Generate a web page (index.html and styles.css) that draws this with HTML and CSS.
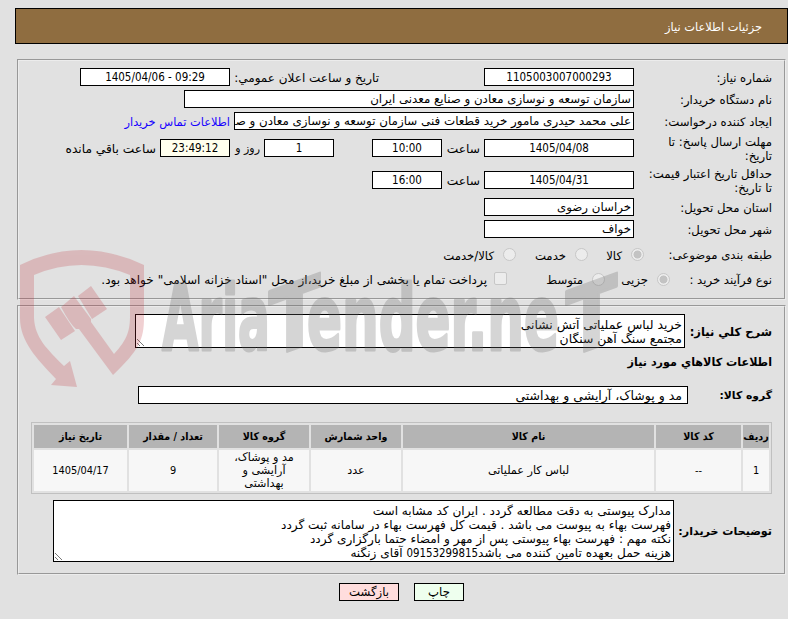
FILE: index.html
```html
<!DOCTYPE html>
<html lang="fa" dir="rtl">
<head>
<meta charset="utf-8">
<title>جزئیات اطلاعات نیاز</title>
<link rel="stylesheet" href="styles.css">
</head>
<body>
<header class="titlebar">جزئیات اطلاعات نیاز</header>
<main>
<section class="panel info">
  <div class="row"><span class="label">شماره نیاز:</span><span class="field num w150">1105003007000293</span><span class="date-label">تاریخ و ساعت اعلان عمومي:</span><span class="field num w150">1405/04/06 - 09:29</span></div>
  <div class="row"><span class="label">نام دستگاه خریدار:</span><span class="field w450">سازمان توسعه و نوسازی معادن و صنایع معدنی ایران</span></div>
  <div class="row"><span class="label">ایجاد کننده درخواست:</span><span class="field w400">علی محمد حیدری مامور خرید قطعات فنی سازمان توسعه و نوسازی معادن و صنایع معدنی</span><a class="link">اطلاعات تماس خریدار</a></div>
  <div class="row tall"><span class="label">مهلت ارسال پاسخ: تا<br>تاریخ:</span><span class="field num w150">1405/04/08</span><span class="unit hour">ساعت</span><span class="field num w70">10:00</span><span class="field num w70 days">1</span><span class="unit day">روز و</span><span class="field num w70 timer">23:49:12</span><span class="unit">ساعت باقي مانده</span></div>
  <div class="row tall"><span class="label">حداقل تاریخ اعتبار قیمت:<br>تا تاریخ:</span><span class="field num w150">1405/04/31</span><span class="unit hour">ساعت</span><span class="field num w70">16:00</span></div>
  <div class="row"><span class="label">استان محل تحویل:</span><span class="field w150">خراسان رضوی</span></div>
  <div class="row"><span class="label">شهر محل تحویل:</span><span class="field w150">خواف</span></div>
  <div class="row options"><span class="label opt-label">طبقه بندی موضوعی:</span><i class="radio on"></i><span class="opt goods">کالا</span><i class="radio"></i><span class="opt service">خدمت</span><i class="radio"></i><span class="opt both">کالا/خدمت</span></div>
  <div class="row options process"><span class="label proc-label">نوع فرآیند خرید :</span><i class="radio on"></i><span class="opt small">جزیی</span><i class="radio"></i><span class="opt medium">متوسط</span><i class="check"></i><span class="opt treasury">پرداخت تمام یا بخشی از مبلغ خرید،از محل "اسناد خزانه اسلامی" خواهد بود.</span></div>
</section>
<section class="panel goods-panel">
  <div class="line summary"><b class="cap">شرح کلي نیاز:</b><div class="area area-summary">خرید لباس عملیاتی آتش نشانی<br>مجتمع سنگ آهن سنگان<svg class="grip" viewBox="0 0 8 8"><path d="M0 1l7 7M0 5l3 3"/></svg></div></div>
  <h2>اطلاعات کالاهاي مورد نیاز</h2>
  <div class="line group"><b class="cap">گروه کالا:</b><span class="field w550">مد و پوشاک، آرایشی و بهداشتی</span></div>
  <table>
    <colgroup><col class="c1"><col class="c2"><col class="c3"><col class="c4"><col class="c5"><col class="c6"><col class="c7"></colgroup>
    <tr><th>ردیف</th><th>کد کالا</th><th>نام کالا</th><th>واحد شمارش</th><th>گروه کالا</th><th>تعداد / مقدار</th><th>تاریخ نیاز</th></tr>
    <tr><td class="digits">1</td><td class="digits">--</td><td>لباس کار عملیاتی</td><td>عدد</td><td>مد و پوشاک،<br>آرایشی و<br>بهداشتی</td><td class="digits">9</td><td class="digits">1405/04/17</td></tr>
  </table>
  <div class="line notes"><b class="cap">توضیحات خریدار:</b><div class="area area-notes">مدارک پیوستی به دقت مطالعه گردد . ایران کد مشابه است<br>فهرست بهاء به پیوست می باشد . قیمت کل فهرست بهاء در سامانه ثبت گردد<br>نکته مهم : فهرست بهاء پیوستی پس از مهر و امضاء حتما بارگزاری گردد<br>هزینه حمل بعهده تامین کننده می باشد<span class="phone">09153299815</span> آقای زنگنه<svg class="grip" viewBox="0 0 8 8"><path d="M0 1l7 7M0 5l3 3"/></svg></div></div>
</section>
</main>
<footer class="actions"><button class="print">چاپ</button><button class="back">بازگشت</button></footer>
<svg class="watermark" viewBox="0 0 620 150" direction="ltr">
  <g class="shield">
    <path d="M20 25Q81-5 144 25V77C144 100 139 110 113 135L79 89 76 89Q70 84 61 67L74 56 91 79 91 82 114 114C128 99 130 90 130 75V35Q81 15 34 35V78C35 98 47 109 64 126L70 121 77 147 51 145 56 139C36 118 20 101 20 78V25Z"/>
    <path d="M45 77L59 67 75 91 61 100ZM78 56L91 46 107 69 92 79Z"/>
  </g>
  <g class="brand">
    <text x="162" y="110" textLength="108" lengthAdjust="spacingAndGlyphs">Aria</text>
    <text transform="translate(269 118) skewY(-20)" textLength="51" lengthAdjust="spacingAndGlyphs">T</text>
    <text x="307" y="110" textLength="252" lengthAdjust="spacingAndGlyphs">ender.ne</text>
    <text transform="translate(566 118) skewY(-20)" textLength="51" lengthAdjust="spacingAndGlyphs">T</text>
  </g>
</svg>
</body>
</html>
```
FILE: styles.css
```css
* { box-sizing: border-box; }
body { margin: 0; width: 788px; height: 619px; overflow: hidden; padding: 8px 0 0; background: #e1e1e1; color: #000; font: 11.7px/14px "DejaVu Sans", sans-serif; position: relative; }
.titlebar { height: 36px; margin-left: 15px; padding: 11px 25px 0 0; border: 1px solid #000; background: #8f6d40; color: #fff; font-size: 11.4px; }
main { padding: 15px 2px 0 17px; }
.panel { border: 2px groove #ececec; padding: 7px 12px 0 0; }
.info { height: 241px; display: flex; flex-direction: column; gap: 4px; }
.row { display: flex; align-items: center; height: 18px; flex: none; white-space: nowrap; }
.row.tall { height: 28px; }
.label { width: 138px; flex: none; padding-top: 2px; }
.field { height: 18px; line-height: 17px; border: 1px solid #000; background: #fff; padding: 0 2px; overflow: hidden; white-space: nowrap; flex: none; font-size: 11.8px; }
.num { text-align: center; direction: ltr; font-family: "DejaVu Sans Condensed", "DejaVu Sans", sans-serif; font-stretch: condensed; font-size: 11.5px; line-height: 17px; }
.w150 { width: 150px; }
.w450 { width: 450px; }
.w400 { width: 400px; font-size: 11.9px; }
.w550 { width: 550px; padding-right: 5px; font-size: 12.5px; }
.w70 { width: 70px; }
.date-label { width: 149px; margin-right: 105px; font-size: 12px; padding-top: 1px; }
.link { color: #1500ff; margin-right: 4px; font-size: 11.4px; padding-top: 1px; }
.unit { margin-right: 4px; padding-top: 2px; }
.hour { width: 38px; font-size: 12.2px; }
.days { margin-right: 38px; }
.day { width: 30px; font-size: 11px; }
.timer { background: #ffffee; }
.timer + .unit { font-size: 12.2px; }
.hour, .day { flex: none; }
.options { height: 22px; padding-top: 2px; }
.process { padding-top: 0; }
.process .opt, .process .label { padding-top: 1px; }
.opt-label { width: 128px; }
.proc-label { width: 102px; }
.radio { width: 13px; height: 13px; flex: none; border: 1px solid #c7c7c7; border-radius: 50%; background: #ececec; }
.radio.on { background: radial-gradient(circle, #c3c3c3 0 3.7px, #ececec 4.3px); }
.check { width: 13px; height: 13px; margin-bottom: 2px; flex: none; border: 1px solid #c7c7c7; border-radius: 2px; background: #ececec; }
.opt { padding-top: 3px; margin-right: 9px; flex: none; }
.goods { width: 34px; }
.service { width: 50px; }
.small { width: 43px; }
.medium { width: 76px; }
.process .treasury { margin-right: 7px; font-size: 12.1px; }
.goods-panel { height: 270px; margin-top: 5px; }
.line { display: flex; align-items: center; }
.cap { flex: none; font-size: 11.3px; white-space: nowrap; padding-top: 2px; }
.area { position: relative; background: #fff; border: 1px solid #000; padding: 3px 2px; white-space: nowrap; overflow: hidden; font-size: 12.1px; }
.area-summary { width: 550px; height: 34px; font-size: 12.4px; }
.summary .cap { width: 87px; font-size: 11.5px; }
h2 { font-size: 11.2px; line-height: 14px; margin: 8px 0 16px; }
.group .cap { width: 84px; font-size: 10.8px; }
table { width: 741px; height: 72px; margin: 18px 0 6px; table-layout: fixed; border: 1px solid #c0c0c0; border-spacing: 2px; border-collapse: separate; background: #e1e1e1; line-height: 13px; font-size: 11.2px; }
th, td { padding: 0; text-align: center; white-space: nowrap; }
th { height: 23px; background: #b4b4b4; font: bold 10.6px/13px "DejaVu Sans Condensed", "DejaVu Sans", sans-serif; font-stretch: condensed; }
td { height: 41px; background: #f7f7f7; }
.digits, .phone { font-family: "DejaVu Sans Condensed", "DejaVu Sans", sans-serif; font-stretch: condensed; font-size: 10.9px; }
.phone { font-size: 11.4px; }
.c1 { width: 26px; } .c2 { width: 85px; } .c3 { width: 251px; } .c4 { width: 90px; } .c5 { width: 90px; } .c6 { width: 88px; } .c7 { width: 93px; }
.notes .cap { width: 98px; font-size: 11.1px; }
.area-notes { width: 621px; height: 62px; }
.grip { position: absolute; left: 1px; bottom: 1px; width: 8px; height: 8px; fill: none; stroke: #555; stroke-width: 0.8; }
.actions { display: flex; justify-content: center; gap: 15px; margin-top: 8px; padding-left: 15px; }
button { height: 18px; padding: 0; border: 1px solid #000; font: inherit; color: #000; }
.print { width: 50px; background: #eeffee; }
.back { width: 60px; background: #ffdddd; }
.watermark { position: absolute; left: 0; top: 240px; width: 620px; height: 150px; overflow: visible; pointer-events: none; }
.shield { fill: #c02c36; opacity: 0.22; }
.brand { fill: #6c6c6c; stroke: #6c6c6c; stroke-width: 3px; stroke-linejoin: round; opacity: 0.28; font: bold 91px "DejaVu Sans Condensed", "DejaVu Sans", sans-serif; direction: ltr; }
```
